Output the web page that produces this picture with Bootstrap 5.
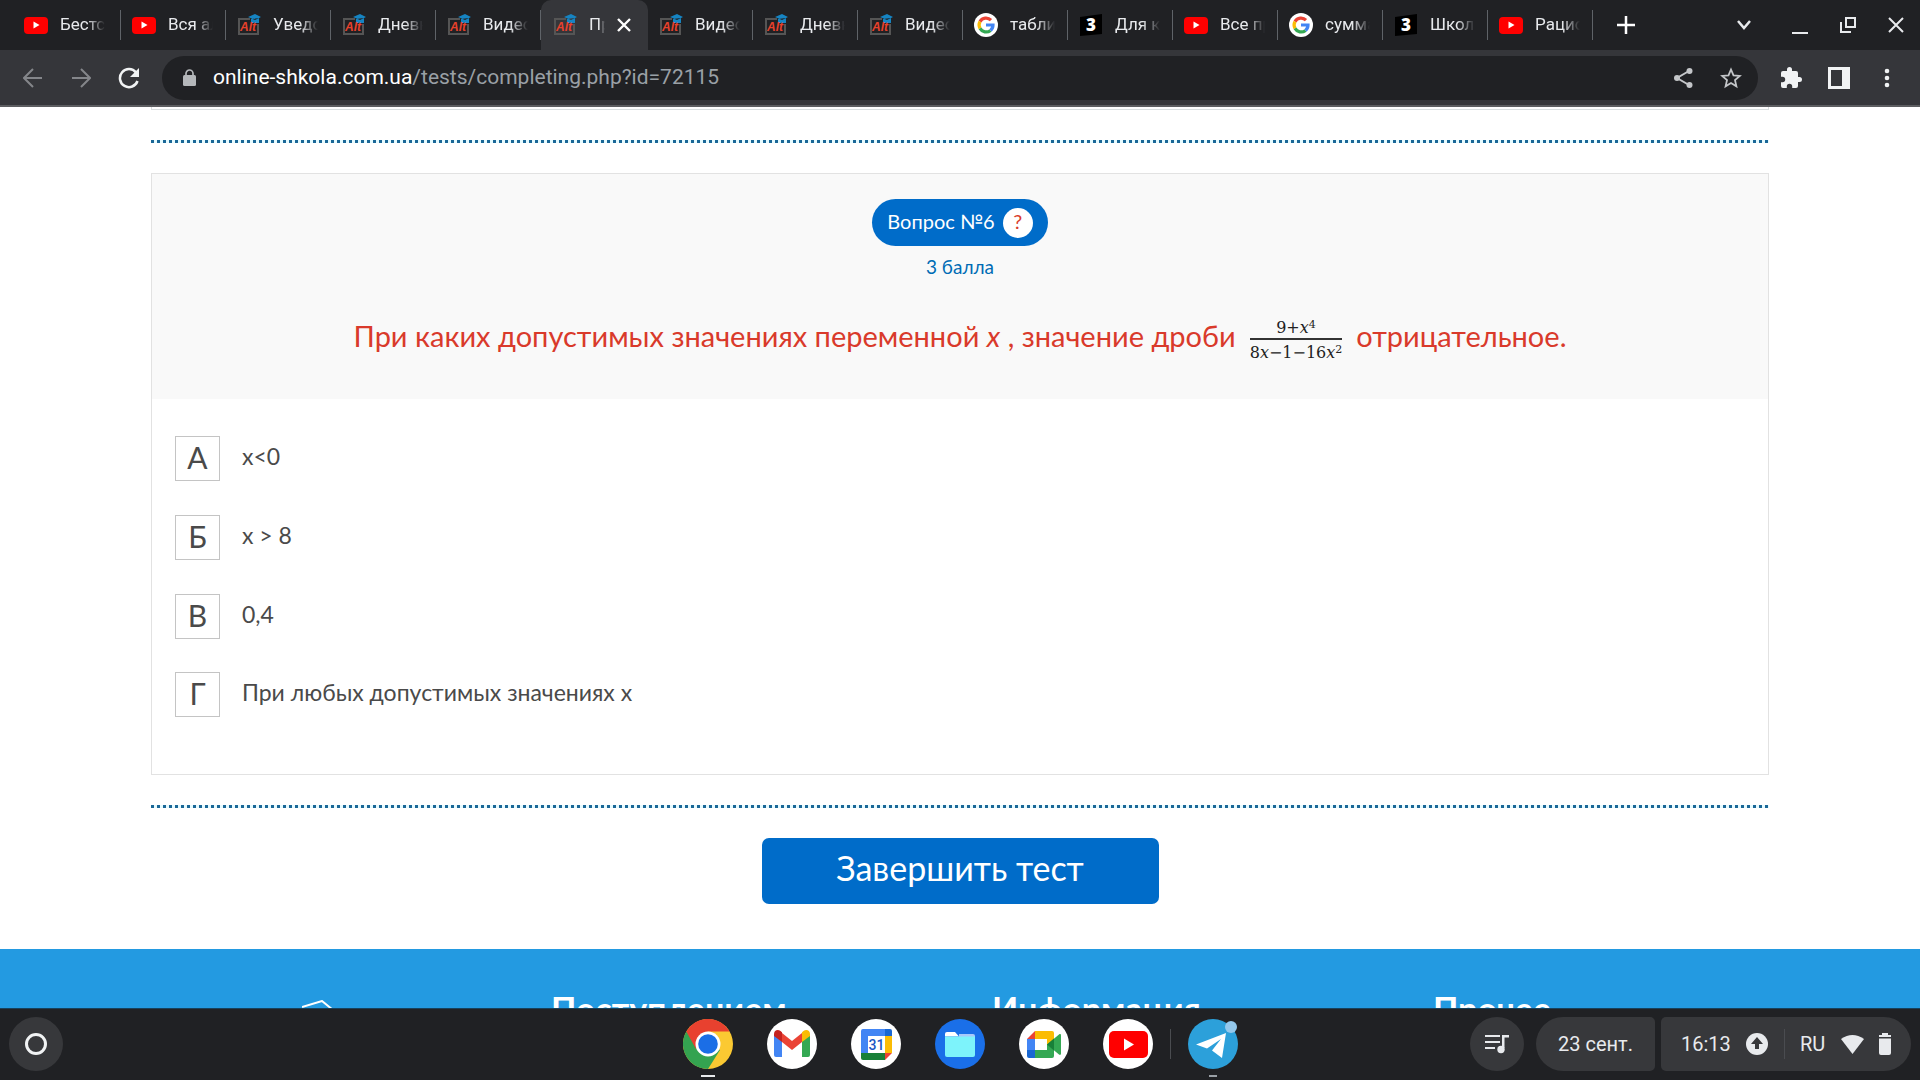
<!DOCTYPE html>
<html lang="ru">
<head>
<meta charset="utf-8">
<meta name="viewport" content="width=device-width, initial-scale=1">
<title>Тест</title>
<link href="https://cdn.jsdelivr.net/npm/bootstrap@5.3.0/dist/css/bootstrap.min.css" rel="stylesheet">
<style>
  body { font-family: Roboto, "Liberation Sans", sans-serif; height: 100vh; background: #fff; }
  button { border: 0; background: none; padding: 0; color: inherit; }
  svg { display: block; flex: none; }
  .tabstrip { background: #202124; height: 50px; color: #e8eaed; padding-left: 13px; }
  .tab { width: 105px; height: 50px; padding-left: 11px; font-size: 17px; color: #e8eaed; position: relative; gap: 12px; text-decoration: none; }
  .tab:first-child { width: 108px; }
  .tab::after { content: ""; position: absolute; right: 0; top: 10px; height: 30px; width: 1px; background: #5f6368; }
  .tab-text { width: 45px; overflow: hidden; white-space: nowrap; line-height: 48px; height: 50px; -webkit-mask-image: linear-gradient(90deg, #000 60%, transparent); }
  .tab.current { background: #35363a; width: 107px; border-radius: 10px 10px 0 0; padding-left: 12px; }
  .tab.current::after { display: none; }
  .tab.current .tab-text { width: 16px; }
  .ctl { width: 48px; height: 48px; display: flex; align-items: center; justify-content: center; flex: none; }
  .toolbar { background: #35363a; height: 57px; border-bottom: 2px solid #5c5d60; color: #e8eaed; padding: 0 9px; }
  .omnibox { background: #202124; border-radius: 22px; height: 44px; margin: 0 9px; padding: 0 3px 0 21px; gap: 17px; }
  .url { font-size: 21px; color: #fff; text-decoration: none; padding-top: 1px; }
  .url span { color: #9aa0a6; }
  .round-btn { width: 54px; border-radius: 50%; }
  .site { font-family: Lato, "Open Sans", sans-serif; overflow: hidden; color: #4a4a4a; min-height: 0; }
  .sheet { margin: 0 151px; }
  .prev-end { height: 3px; border: 1px solid #d9dfe0; border-top: 0; margin-bottom: 30px; }
  .dots { height: 3px; background: repeating-linear-gradient(90deg, #1a6797 0 3px, #e6fbff 3px 6px); }
  .question { border: 1px solid #e2e2e2; margin: 30px 0; }
  .question-head { background: #f9f9f9; padding: 25px 0 41px; }
  .pill { background: #006cc9; color: #fff; border-radius: 24px; height: 47px; padding: 0 15px; font-size: 20px; line-height: 26px; gap: 8px; }
  .pill-text { padding-bottom: 3px; }
  .hint { width: 30px; height: 30px; border-radius: 50%; background: #fff; color: #d93a2b; padding-bottom: 3px; }
  .points { color: #006cb5; font-size: 19px; line-height: 24px; margin: 9px 0 35px; }
  .ask { color: #d93a2b; font-size: 29px; line-height: 44px; gap: 14px; margin: 0; }
  .frac { font-family: "DejaVu Serif", serif; font-size: 16px; line-height: 20px; color: #222; text-align: center; padding-top: 4px; }
  .frac sup { font-size: 11px; line-height: 0; }
  .frac-top { display: block; border-bottom: 2px solid #333; }
  .frac-low { display: block; padding-top: 4px; line-height: 18px; height: 18px; }
  .answers { padding: 37px 23px 57px; gap: 34px; }
  .answer { gap: 22px; font-size: 23px; line-height: 41px; height: 45px; }
  .answer + .answer:last-child { margin-top: -1px; }
  .mark-box { width: 45px; height: 45px; border: 1px solid #c4c4c4; font-size: 30px; text-align: center; }
  .finish { background: #006cc9; color: #fff; border-radius: 7px; width: 397px; height: 66px; font-size: 34px; padding-bottom: 8px; margin: 30px 0 45px; }
  .site-footer { background: #239ae1; color: #fff; padding: 40px 0 60px 115px; }
  .site-footer h3 { font-size: 34px; line-height: 40px; font-weight: 700; margin: 0; width: 441px; flex: none; white-space: nowrap; }
  .foot-logo { width: 436px; flex: none; padding: 11px 0 0 187px; }
  .shelf { background: #202124; height: 72px; border-top: 1px solid #17415c; color: #e8eaed; font-size: 20px; padding: 0 9px 1px; display: grid; grid-template-columns: 1fr auto 1fr; align-items: center; }
  .tile { background: #37383b; height: 54px; }
  .app-btn { position: relative; margin: 0 17px; }
  .running::after { content: ""; position: absolute; left: 50%; margin-left: -7px; bottom: -8px; width: 14px; height: 2px; background: #e8eaed; }
  .idle::after { width: 8px; margin-left: -4px; background: #9aa0a6; }
  .shelf-line { width: 1px; height: 30px; background: #4a4c50; }
  .date-tile { border-radius: 27px 5px 5px 27px; width: 119px; }
  .status-tile { border-radius: 5px 27px 27px 5px; width: 250px; padding: 0 20px; margin-left: 6px; }
</style>
<script src="https://cdn.jsdelivr.net/npm/bootstrap@5.3.0/dist/js/bootstrap.bundle.min.js"></script>
</head>
<body class="d-flex flex-column overflow-hidden">

<nav class="tabstrip d-flex align-items-center flex-shrink-0" aria-label="Вкладки">
  <a href="#" class="tab d-flex align-items-center"><svg width="24" height="24"><use href="#yt"/></svg><span class="tab-text">Бестсел</span></a>
  <a href="#" class="tab d-flex align-items-center"><svg width="24" height="24"><use href="#yt"/></svg><span class="tab-text">Вся алг</span></a>
  <a href="#" class="tab d-flex align-items-center"><svg width="24" height="24"><use href="#alt"/></svg><span class="tab-text">Уведом</span></a>
  <a href="#" class="tab d-flex align-items-center"><svg width="24" height="24"><use href="#alt"/></svg><span class="tab-text">Дневник</span></a>
  <a href="#" class="tab d-flex align-items-center"><svg width="24" height="24"><use href="#alt"/></svg><span class="tab-text">Видеоу</span></a>
  <a href="#" class="tab current d-flex align-items-center"><svg width="24" height="24"><use href="#alt"/></svg><span class="tab-text">Про</span><svg width="14" height="14" viewBox="0 0 14 14" stroke="#fff" stroke-width="2.400"><path d="M1 1l12 12M13 1L1 13"/></svg></a>
  <a href="#" class="tab d-flex align-items-center"><svg width="24" height="24"><use href="#alt"/></svg><span class="tab-text">Видеоу</span></a>
  <a href="#" class="tab d-flex align-items-center"><svg width="24" height="24"><use href="#alt"/></svg><span class="tab-text">Дневник</span></a>
  <a href="#" class="tab d-flex align-items-center"><svg width="24" height="24"><use href="#alt"/></svg><span class="tab-text">Видеоу</span></a>
  <a href="#" class="tab d-flex align-items-center"><svg width="24" height="24"><use href="#goog"/></svg><span class="tab-text">таблица</span></a>
  <a href="#" class="tab d-flex align-items-center"><svg width="24" height="24"><use href="#zno"/></svg><span class="tab-text">Для ко</span></a>
  <a href="#" class="tab d-flex align-items-center"><svg width="24" height="24"><use href="#yt"/></svg><span class="tab-text">Все пр</span></a>
  <a href="#" class="tab d-flex align-items-center"><svg width="24" height="24"><use href="#goog"/></svg><span class="tab-text">сумма</span></a>
  <a href="#" class="tab d-flex align-items-center"><svg width="24" height="24"><use href="#zno"/></svg><span class="tab-text">Школа</span></a>
  <a href="#" class="tab d-flex align-items-center"><svg width="24" height="24"><use href="#yt"/></svg><span class="tab-text">Рацион</span></a>
  <button class="ms-4" aria-label="Новая вкладка"><svg width="18" height="18" viewBox="0 0 18 18" stroke="#fff" stroke-width="2.500"><path d="M9 0v18M0 9h18"/></svg></button>
  <div class="d-flex align-items-center ms-auto">
    <button class="ctl me-2" aria-label="Поиск вкладок"><svg width="14" height="10" viewBox="0 0 14 10" fill="none" stroke="#e8eaed" stroke-width="2.500"><path d="M1 1l6 7 6-7"/></svg></button>
    <button class="ctl" aria-label="Свернуть"><svg width="18" height="18" viewBox="0 0 18 18"><path d="M1 16h16v2H1z" fill="#e8eaed"/></svg></button>
    <button class="ctl" aria-label="Окно"><svg width="18" height="18" viewBox="0 0 18 18" fill="none" stroke="#e8eaed" stroke-width="2"><path d="M7 2h9v9H7zM2 6v10h10"/></svg></button>
    <button class="ctl" aria-label="Закрыть"><svg width="16" height="16" viewBox="0 0 16 16" stroke="#e8eaed" stroke-width="2"><path d="M1 1l14 14M15 1L1 15"/></svg></button>
  </div>
</nav>

<div class="toolbar d-flex align-items-center flex-shrink-0">
  <button class="ctl" aria-label="Назад"><svg width="20" height="20" viewBox="0 0 20 20" fill="none" stroke="#84868a" stroke-width="2"><path d="M19 10H2M10 1l-9 9 9 9"/></svg></button>
  <button class="ctl" aria-label="Вперёд"><svg width="20" height="20" viewBox="0 0 20 20" fill="none" stroke="#84868a" stroke-width="2"><path d="M1 10h17M10 1l9 9-9 9"/></svg></button>
  <button class="ctl" aria-label="Обновить"><svg width="22" height="22" viewBox="0 0 22 22"><path d="M18 5.500A9 9 0 1 0 19.500 14" fill="none" stroke="#f1f3f4" stroke-width="2.500"/><path d="M21 1v9h-9z" fill="#f1f3f4"/></svg></button>
  <div class="omnibox d-flex align-items-center flex-grow-1">
    <svg width="13" height="18" viewBox="0 0 13 18"><rect y="6" width="13" height="11" rx="1.500" fill="#b4b7ba"/><path d="M3 7V4.500a3.500 3.500 0 0 1 7 0V7" fill="none" stroke="#b4b7ba" stroke-width="1.700"/></svg>
    <a class="url flex-grow-1" href="#">online-shkola.com.ua<span>/tests/completing.php?id=72115</span></a>
    <div class="d-flex">
      <button class="ctl" aria-label="Поделиться"><svg width="19" height="20" viewBox="0 0 19 20" fill="#c4c6c9"><path d="M15 3L3 10l12 7" fill="none" stroke="#c4c6c9" stroke-width="2"/><circle cx="15.500" cy="3" r="3"/><circle cx="3" cy="10" r="3"/><circle cx="15.500" cy="17" r="3"/></svg></button>
      <button class="ctl" aria-label="Закладка"><svg width="22" height="22" viewBox="0 0 22 22" fill="none" stroke="#c4c6c9" stroke-width="1.800"><path d="M11 2.500l2.500 5.800 6.300.6-4.800 4.200 1.400 6.200L11 16l-5.400 3.300L7 13.100 2.200 8.900l6.300-.6z"/></svg></button>
    </div>
  </div>
  <button class="ctl" aria-label="Расширения"><svg width="24" height="24" viewBox="0 0 24 24" fill="#f1f3f4"><path d="M20.500 11H19V7a2 2 0 0 0-2-2h-4V3.500a2.500 2.500 0 0 0-5 0V5H4a2 2 0 0 0-2 2v3.800h1.500a2.700 2.700 0 0 1 0 5.400H2V20a2 2 0 0 0 2 2h3.800v-1.500a2.700 2.700 0 0 1 5.400 0V22H17a2 2 0 0 0 2-2v-4h1.500a2.500 2.500 0 0 0 0-5z"/></svg></button>
  <button class="ctl" aria-label="Боковая панель"><svg width="22" height="22" viewBox="0 0 22 22"><path d="M0 0h22v22H0zM3 3v16h11V3z" fill="#f1f3f4" fill-rule="evenodd"/></svg></button>
  <button class="ctl" aria-label="Меню"><svg width="6" height="20" viewBox="0 0 6 20" fill="#f1f3f4"><circle cx="3" cy="3" r="2.300"/><circle cx="3" cy="10" r="2.300"/><circle cx="3" cy="17" r="2.300"/></svg></button>
</div>

<main class="site flex-grow-1">
  <div class="sheet">
    <div class="prev-end"></div>
    <div class="dots"></div>
    <section class="question">
      <div class="question-head d-flex flex-column align-items-center">
        <div class="pill d-flex align-items-center"><span class="pill-text">Вопрос №6</span><button class="hint">?</button></div>
        <div class="points">3 балла</div>
        <p class="ask d-flex align-items-start">
          <span>При каких допустимых значениях переменной <i>x</i> , значение дроби</span>
          <span class="frac"><span class="frac-top">9+<i>x</i><sup>4</sup></span><span class="frac-low">8<i>x</i>−1−16<i>x</i><sup>2</sup></span></span>
          <span>отрицательное.</span>
        </p>
      </div>
      <div class="answers d-flex flex-column">
        <label class="answer d-flex"><input class="btn-check" type="radio" name="q6"><span class="mark-box">А</span>x&lt;0</label>
        <label class="answer d-flex"><input class="btn-check" type="radio" name="q6"><span class="mark-box">Б</span>x &gt; 8</label>
        <label class="answer d-flex"><input class="btn-check" type="radio" name="q6"><span class="mark-box">В</span>0,4</label>
        <label class="answer d-flex"><input class="btn-check" type="radio" name="q6"><span class="mark-box">Г</span>При любых допустимых значениях x</label>
      </div>
    </section>
    <div class="dots"></div>
    <div class="text-center"><button class="finish">Завершить тест</button></div>
  </div>
  <footer class="site-footer d-flex">
    <div class="foot-logo"><svg width="50" height="30" viewBox="0 0 50 30" fill="none" stroke="#fff" stroke-width="2"><path d="M0 7L20 1l22 18"/></svg></div>
    <h3>Поступлением</h3>
    <h3>Информация</h3>
    <h3>Прочее</h3>
  </footer>
</main>

<footer class="shelf flex-shrink-0">
  <div class="d-flex"><button class="tile round-btn d-flex align-items-center justify-content-center" aria-label="Панель запуска"><svg width="22" height="22" viewBox="0 0 22 22"><circle cx="11" cy="11" r="9.500" fill="none" stroke="#f1f3f4" stroke-width="3"/></svg></button></div>
  <div class="d-flex align-items-center">
    <button class="app-btn running" aria-label="Chrome"><svg width="50" height="50" viewBox="0 0 50 50"><circle cx="25" cy="25" r="25" fill="#fbc932"/><path d="M25 25L3.300 12.500A25 25 0 0 0 25 50l12-19z" fill="#34a350"/><path d="M3.300 12.500A25 25 0 0 1 46.700 12.500H25L13 30z" fill="#e8412f"/><circle cx="25" cy="25" r="12.500" fill="#fff"/><circle cx="25" cy="25" r="9.800" fill="#1b6ee6"/></svg></button>
    <button class="app-btn" aria-label="Gmail"><svg width="50" height="50" viewBox="0 0 50 50"><circle cx="25" cy="25" r="25" fill="#fff"/><path d="M7 16l8 6v16H9a2 2 0 0 1-2-2z" fill="#4285f4"/><path d="M43 16l-8 6v16h6a2 2 0 0 0 2-2z" fill="#34a853"/><path d="M15 14l10 8 10-8v9l-10 8-10-8z" fill="#ea4335"/><path d="M7 17v-2c0-4 4-5 6.500-3l1.500 1.300V23z" fill="#c5221f"/><path d="M43 17v-2c0-4-4-5-6.500-3L35 13.300V23z" fill="#fbbc04"/></svg></button>
    <button class="app-btn" aria-label="Календарь"><svg width="50" height="50" viewBox="0 0 50 50"><circle cx="25" cy="25" r="25" fill="#fff"/><path d="M12 10h22v7H17v17h-7V12a2 2 0 0 1 2-2z" fill="#4285f4"/><path d="M34 10h5a2 2 0 0 1 2 2v5h-7z" fill="#1967d2"/><path d="M34 17h7v17h-7z" fill="#fbbc04"/><path d="M10 34h24v7H12a2 2 0 0 1-2-2z" fill="#188038"/><path d="M34 34h7l-7 7z" fill="#ea4335"/><text x="25.500" y="31" font-family="Roboto" font-weight="500" font-size="14" text-anchor="middle" fill="#1a56c4">31</text></svg></button>
    <button class="app-btn" aria-label="Файлы"><svg width="50" height="50" viewBox="0 0 50 50"><circle cx="25" cy="25" r="25" fill="#1a6fe8"/><path d="M24 15h14a2 2 0 0 1 2 2v5H24z" fill="#a9c9fa"/><path d="M10 15a2 2 0 0 1 2-2h8l4 4.500H10z" fill="#fff"/><path d="M10 17.500h30V36a2 2 0 0 1-2 2H12a2 2 0 0 1-2-2z" fill="#7df3fb"/></svg></button>
    <button class="app-btn" aria-label="Meet"><svg width="50" height="50" viewBox="0 0 50 50"><circle cx="25" cy="25" r="25" fill="#fff"/><path d="M16 12v8H8z" fill="#ea4335"/><path d="M16 12h17a2 2 0 0 1 2 2v11l-7 0v-5H16z" fill="#fbbc04"/><path d="M8 20h8v11H8z" fill="#4285f4"/><path d="M8 31h8v8h-6a2 2 0 0 1-2-2z" fill="#1967d2"/><path d="M16 31h12v-6h7v12a2 2 0 0 1-2 2H16z" fill="#34a853"/><path d="M28 25.500l12-10c1-.8 2-.4 2 1v18c0 1.400-1 1.800-2 1z" fill="#34a853"/><path d="M28 25.500l7-6v12z" fill="#188038"/></svg></button>
    <button class="app-btn" aria-label="YouTube"><svg width="50" height="50" viewBox="0 0 50 50"><circle cx="25" cy="25" r="25" fill="#fff"/><rect x="6" y="12" width="39" height="27" rx="5" fill="#f00"/><path d="M21 19.500v12l10-6z" fill="#fff"/></svg></button>
    <span class="shelf-line"></span>
    <button class="app-btn running idle" aria-label="Telegram"><svg width="50" height="50" viewBox="0 0 50 50"><circle cx="25" cy="25" r="25" fill="#2ca0da"/><path d="M8 25.500L38 14l-4 25-10-7.500L33 20 19 29.500z" fill="#fff"/><circle cx="43" cy="8" r="6" fill="#94c8ec"/></svg></button>
  </div>
  <div class="d-flex align-items-center justify-content-end">
    <button class="tile round-btn d-flex align-items-center justify-content-center me-2" aria-label="Музыка"><svg width="24" height="20" viewBox="0 0 24 20" fill="#e8eaed"><path d="M0 1h15v2H0zM0 7h15v2H0zM0 13h10v2H0zM17 1h7v2.500h-4.500V14H17z"/><circle cx="16" cy="15.500" r="3.700"/></svg></button>
    <button class="tile date-tile ms-1">23 сент.</button>
    <button class="tile status-tile d-flex align-items-center justify-content-between">
      <span>16:13</span>
      <svg width="22" height="22" viewBox="0 0 22 22"><circle cx="11" cy="11" r="11" fill="#e8eaed"/><path d="M11 4l6 7h-4v5H9v-5H5z" fill="#37383b"/></svg>
      <span class="shelf-line"></span>
      <span>RU</span>
      <svg width="23" height="19" viewBox="0 0 23 19"><path d="M0 4q11.500-8 23 0L11.500 19z" fill="#e8eaed"/></svg>
      <svg width="12" height="22" viewBox="0 0 12 22" fill="#e8eaed"><path d="M3 0h6v2h3v2H0V2h3zM0 5.500h12V20a2 2 0 0 1-2 2H2a2 2 0 0 1-2-2z"/></svg>
    </button>
  </div>
</footer>

<svg width="0" height="0" class="position-absolute">
  <symbol id="yt" viewBox="0 0 24 24"><rect y="4" width="24" height="17" rx="4" fill="#f00"/><path d="M9.500 8.500v7l6-3.500z" fill="#fff"/></symbol>
  <symbol id="alt" viewBox="0 0 24 24"><path d="M13 6H2v15h19V11" fill="none" stroke="#555" stroke-width="2"/><path d="M11 4l7-3 6 3-6 3zM14 6v4h8V5z" fill="#1684c2"/><text x="3" y="18" font-family="Liberation Sans" font-style="italic" font-weight="700" font-size="12" fill="#e8412c">Alt</text></symbol>
  <symbol id="goog" viewBox="0 0 24 24"><circle cx="12" cy="12" r="12" fill="#fff"/><g fill="none" stroke-width="3.200"><path d="M17 7.200A7 7 0 0 0 6 8.600" stroke="#ea4335"/><path d="M6 8.600a7 7 0 0 0 0 6.800" stroke="#fbbc05"/><path d="M6 15.400a7 7 0 0 0 10.500 2" stroke="#34a853"/><path d="M16.500 17.400A7 7 0 0 0 19 12h-7" stroke="#4285f4"/></g></symbol>
  <symbol id="zno" viewBox="0 0 24 24"><path d="M1 4l22-3v20L1 23z" fill="#000"/><text x="7" y="18" font-family="Open Sans" font-weight="800" font-size="17" fill="#fff">3</text></symbol>
</svg>
</body>
</html>
